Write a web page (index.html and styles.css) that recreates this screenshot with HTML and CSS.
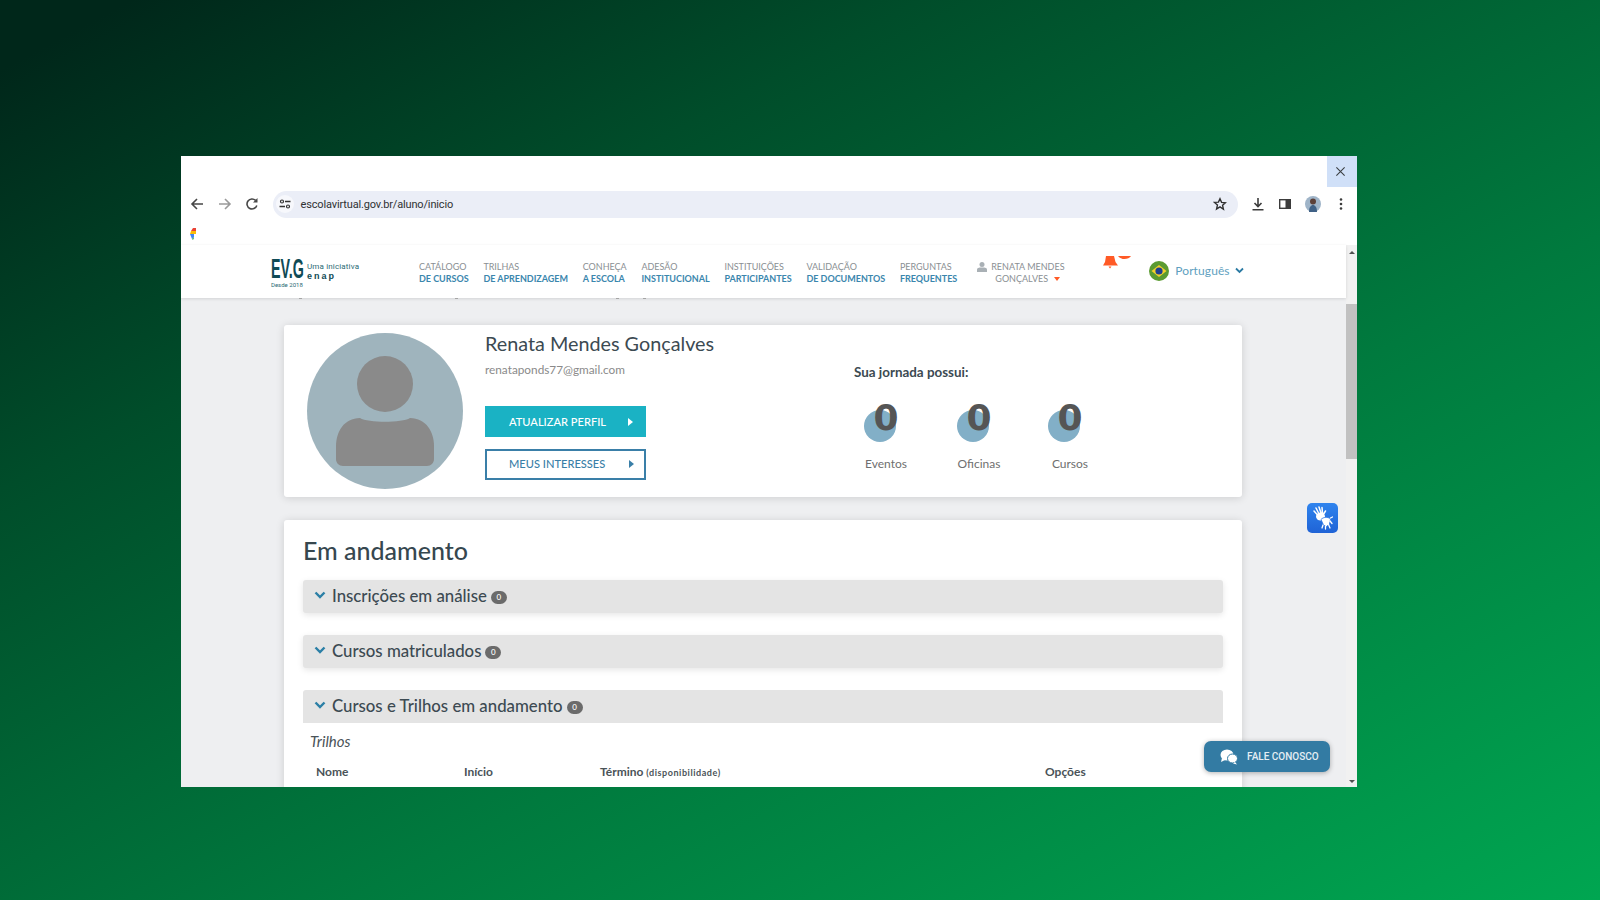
FILE: index.html
```html
<!DOCTYPE html>
<html lang="pt-BR">
<head>
    <meta charset="UTF-8">
    <title>Escola Virtual</title>
    <link rel="stylesheet" href="styles.css">
</head>
<body>
    <div class="window">
        <div class="tabstrip">
            <div class="tab-close">
                <svg width="11" height="11" viewBox="0 0 12 12"><path d="M1.500 1.500l9 9M10.500 1.500l-9 9" stroke="#3c4043" stroke-width="1.200" fill="none"/></svg>
            </div>
        </div>
        <div class="toolbar">
            <svg class="tb-icon" width="14" height="14" viewBox="0 0 14 14"><path d="M13 7H2.500M7 2L2 7l5 5" stroke="#474747" stroke-width="1.600" fill="none"/></svg>
            <svg class="tb-icon" width="14" height="14" viewBox="0 0 14 14"><path d="M1 7h10.500M7 2l5 5-5 5" stroke="#9a9a9a" stroke-width="1.600" fill="none"/></svg>
            <svg class="tb-icon" width="14" height="14" viewBox="0 0 14 14"><path d="M11.800 8.500A5 5 0 1 1 10.600 3.500" stroke="#474747" stroke-width="1.600" fill="none"/><path d="M12.500 1v4.500H8z" fill="#474747"/></svg>
            <div class="urlbar">
                <span class="site-icon">
                    <svg width="12" height="12" viewBox="0 0 12 12"><circle cx="3" cy="3.500" r="1.500" fill="none" stroke="#333" stroke-width="1.200"/><path d="M6 3.500h5.500M.5 8.500H6" stroke="#333" stroke-width="1.300" fill="none"/><circle cx="9" cy="8.500" r="1.500" fill="none" stroke="#333" stroke-width="1.200"/></svg>
                </span>
                <span class="url">escolavirtual.gov.br/aluno/inicio</span>
                <svg class="star" width="14" height="14" viewBox="0 0 24 24"><path d="M12 3l2.700 6.200 6.800.6-5.100 4.500 1.500 6.700L12 17l-5.900 3.500 1.500-6.700-5.100-4.500 6.800-.6z" fill="none" stroke="#303030" stroke-width="2.400"/></svg>
            </div>
            <div class="tb-right">
                <svg width="14" height="14" viewBox="0 0 14 14"><path d="M7 1v8M3.500 6L7 9.500 10.500 6M1.500 12.700h11" stroke="#3c3c3c" stroke-width="1.600" fill="none"/></svg>
                <svg width="14" height="14" viewBox="0 0 14 14"><rect x="1.700" y="2.700" width="10.600" height="8.600" fill="none" stroke="#3c3c3c" stroke-width="1.400"/><rect x="7.500" y="2.700" width="4.800" height="8.600" fill="#3c3c3c"/></svg>
                <svg width="16" height="16" viewBox="0 0 16 16"><circle cx="8" cy="8" r="8" fill="#9fb4c8"/><circle cx="8" cy="5.500" r="3" fill="#5b4038"/><path d="M4 16c0-5 2-7 4-7s4 2 4 7z" fill="#3f6186"/></svg>
                <svg class="kebab" width="4" height="14" viewBox="0 0 4 14"><circle cx="2" cy="2.500" r="1.300" fill="#3c3c3c"/><circle cx="2" cy="7" r="1.300" fill="#3c3c3c"/><circle cx="2" cy="11.500" r="1.300" fill="#3c3c3c"/></svg>
            </div>
        </div>
        <div class="bookmarks">
            <svg width="6" height="13" viewBox="0 0 6 13"><path d="M6 1H3L1 4h5z" fill="#ea4335"/><path d="M1 4L0 7l6 0V4z" fill="#fbbc05"/><path d="M0 7l2 5 2 -2V7z" fill="#4285f4"/><path d="M4 7v3l-2 2 1 1 1-2z" fill="#34a853"/></svg>
        </div>

        <div class="viewport">
            <div class="main">
                <nav class="nav">
                    <div class="logo">
                        <span class="logo-mark">EV.G</span>
                        <div class="logo-side">
                            <span class="logo-line">Uma iniciativa</span>
                            <span class="logo-enap">enap</span>
                        </div>
                        <span class="logo-since">Desde 2018</span>
                    </div>
                    <ul class="menu">
                        <li><span>CATÁLOGO</span><b>DE CURSOS</b></li>
                        <li><span>TRILHAS</span><b>DE APRENDIZAGEM</b></li>
                        <li><span>CONHEÇA</span><b>A ESCOLA</b></li>
                        <li><span>ADESÃO</span><b>INSTITUCIONAL</b></li>
                        <li><span>INSTITUIÇÕES</span><b>PARTICIPANTES</b></li>
                        <li><span>VALIDAÇÃO</span><b>DE DOCUMENTOS</b></li>
                        <li><span>PERGUNTAS</span><b>FREQUENTES</b></li>
                    </ul>
                    <div class="user">
                        <svg width="10" height="10" viewBox="0 0 10 10"><circle cx="5" cy="2.500" r="2.500" fill="#a9b0b5"/><path d="M0 10V7.500C0 6 1.500 5.500 5 5.500s5 .5 5 2V10z" fill="#a9b0b5"/></svg>
                        <div class="user-name">RENATA MENDES<br>GONÇALVES <i class="caret"></i></div>
                    </div>
                    <svg class="bell" width="28" height="13" viewBox="0 0 28 13"><path d="M3 0h8l1.500 6 2.500 3.500H0L2 6z" fill="#ff5a26"/><path d="M5.500 10.500h3L7 12.500z" fill="#ff5a26"/><path d="M15 0h13c-2 3-9 5-13 0z" fill="#ff5a26"/></svg>
                    <div class="lang">
                        <svg width="20" height="20" viewBox="0 0 20 20"><circle cx="10" cy="10" r="10" fill="#5b9b31"/><path d="M10 4l7.500 6L10 16 2.500 10z" fill="#f3d02c"/><circle cx="10" cy="10" r="3.600" fill="#1f3f8f"/></svg>
                        <span>Português</span>
                        <svg width="9" height="7" viewBox="0 0 9 7"><path d="M1 1.500l3.500 3.500L8 1.500" stroke="#2b7aa3" stroke-width="1.800" fill="none"/></svg>
                    </div>
                </nav>

                <div class="page">
                    <section class="card profile">
                        <svg class="avatar" width="156" height="156" viewBox="0 0 156 156">
                            <circle cx="78" cy="78" r="78" fill="#9fb4bd"/>
                            <circle cx="78" cy="51" r="28" fill="#8a8a8a"/>
                            <path d="M53 85c8 5 42 5 50 0 16 0 24 14 24 28v13c0 4-3 7-7 7H36c-4 0-7-3-7-7v-13c0-14 8-28 24-28z" fill="#8a8a8a"/>
                        </svg>
                        <div class="profile-info">
                            <h1 class="profile-name">Renata Mendes Gonçalves</h1>
                            <p class="profile-mail">renataponds77@gmail.com</p>
                            <a class="btn btn-fill">ATUALIZAR PERFIL <i class="tri"></i></a>
                            <a class="btn btn-line">MEUS INTERESSES <i class="tri"></i></a>
                        </div>
                        <div class="journey">
                            <h3 class="journey-title">Sua jornada possui:</h3>
                            <div class="stats">
                                <div class="stat"><div class="stat-badge"><i class="dot"></i><b>0</b></div><span>Eventos</span></div>
                                <div class="stat"><div class="stat-badge"><i class="dot"></i><b>0</b></div><span>Oficinas</span></div>
                                <div class="stat"><div class="stat-badge"><i class="dot"></i><b>0</b></div><span>Cursos</span></div>
                            </div>
                        </div>
                    </section>

                    <section class="card progress">
                        <h2 class="progress-title">Em andamento</h2>
                        <div class="acc">
                            <svg width="12" height="9" viewBox="0 0 12 9"><path d="M1.500 1.500L6 6l4.500-4.500" stroke="#2b7fa6" stroke-width="2.400" fill="none"/></svg>
                            Inscrições em análise <em class="count">0</em>
                        </div>
                        <div class="acc">
                            <svg width="12" height="9" viewBox="0 0 12 9"><path d="M1.500 1.500L6 6l4.500-4.500" stroke="#2b7fa6" stroke-width="2.400" fill="none"/></svg>
                            Cursos matriculados <em class="count">0</em>
                        </div>
                        <div class="acc acc-open">
                            <svg width="12" height="9" viewBox="0 0 12 9"><path d="M1.500 1.500L6 6l4.500-4.500" stroke="#2b7fa6" stroke-width="2.400" fill="none"/></svg>
                            Cursos e Trilhos em andamento <em class="count">0</em>
                        </div>
                        <div class="acc-body">
                            <p class="acc-sub">Trilhos</p>
                            <div class="cols">
                                <span>Nome</span>
                                <span>Início</span>
                                <span>Término <small>(disponibilidade)</small></span>
                                <span>Opções</span>
                            </div>
                        </div>
                    </section>
                </div>

                <i class="peek"></i>
                <div class="libras">
                    <svg width="20" height="24" viewBox="0 0 20 24">
                        <path d="M3 2l3 6M6 1l2 6M9 1.500L9.500 7M1 5l4 4.500M12.500 5L10 9" stroke="#fff" stroke-width="1.500" stroke-linecap="round" fill="none"/>
                        <ellipse cx="7.500" cy="10.500" rx="4.500" ry="4" fill="#fff"/>
                        <path d="M8 13.500c2-2.500 7-3 9.500-.5l-1 5-3 2.500-3-1.500z" fill="#fff" stroke="#2a73e4" stroke-width=".8"/>
                        <path d="M10 19l-1 3M12.500 20v3M15.500 18.500l1.500 3.500M17 15l2 2.500M17.500 12l2-1" stroke="#fff" stroke-width="1.300" stroke-linecap="round" fill="none"/>
                    </svg>
                </div>
                <div class="talk">
                    <svg width="18" height="16" viewBox="0 0 18 16"><ellipse cx="7" cy="6" rx="6.500" ry="5.500" fill="#fff"/><path d="M2 9l-1 4 4-2z" fill="#fff"/><ellipse cx="12.500" cy="9.500" rx="5" ry="4.500" fill="#fff" stroke="#337ba3"/><path d="M15 13l2 2.500-4-1z" fill="#fff"/></svg>
                    <span>FALE CONOSCO</span>
                </div>
            </div>

            <div class="scrollbar">
                <i class="sb-up"></i>
                <div class="sb-thumb"></div>
                <i class="sb-down"></i>
            </div>
        </div>
    </div>
</body>
</html>
```

FILE: styles.css
```css
html, body {
    height: 100%;
}
body {
    margin: 0;
    box-sizing: border-box;
    padding: 156px 0 0 181px;
    overflow: hidden;
    background: linear-gradient(152deg, #00271a 4%, #004d2a 28%, #007a3e 62%, #00a651 100%);
    font-family: "Lato", "Liberation Sans", sans-serif;
    color: #3c4a52;
}
.window {
    width: 1176px;
    height: 631px;
    background: #fff;
    display: flex;
    flex-direction: column;
    overflow: hidden;
}

/* browser chrome */
.tabstrip {
    height: 31px;
    flex: none;
    display: flex;
    justify-content: flex-end;
}
.tab-close {
    width: 30px;
    padding-right: 3px;
    box-sizing: border-box;
    background: #d0e0f8;
    display: flex;
    align-items: center;
    justify-content: center;
}
.toolbar {
    height: 34px;
    flex: none;
    display: flex;
    align-items: center;
    padding-left: 9px;
}
.tb-icon {
    margin-right: 13.500px;
}
.urlbar {
    width: 965px;
    height: 27px;
    background: #ebeef7;
    border-radius: 14px;
    display: flex;
    align-items: center;
    padding: 0 11px 0 3px;
    box-sizing: border-box;
}
.site-icon {
    width: 18px;
    height: 18px;
    border-radius: 50%;
    background: #f7f8fc;
    display: flex;
    align-items: center;
    justify-content: center;
    margin-right: 7px;
}
.url {
    flex: 1;
    font: 11px "Roboto", "Liberation Sans", sans-serif;
    letter-spacing: -.15px;
    color: #2f3133;
}
.tb-right {
    display: flex;
    align-items: center;
    gap: 13px;
    margin-left: 13px;
}
.kebab {
    margin-left: 5px;
}
.bookmarks {
    height: 24px;
    flex: none;
    padding: 3px 0 0 9px;
    box-sizing: border-box;
}

.viewport {
    flex: 1;
    display: flex;
    min-height: 0;
}
.main {
    flex: 1;
    position: relative;
    display: flex;
    flex-direction: column;
    min-width: 0;
}

/* site nav */
.nav {
    height: 53px;
    flex: none;
    display: flex;
    align-items: center;
    background: #fff;
    box-shadow: 0 1px 3px rgba(0, 0, 0, .12);
    position: relative;
    z-index: 2;
    padding-left: 90px;
}
.logo {
    width: 148px;
    height: 35px;
    flex: none;
    display: grid;
    grid-template-columns: 36px 1fr;
    grid-template-rows: 26px 9px;
    color: #0f4a55;
}
.logo-mark {
    margin-top: 5px;
    height: 20px;
    font: bold 28px/20px "Liberation Sans", sans-serif;
    display: block;
    white-space: nowrap;
    transform: scaleX(.51);
    transform-origin: left center;
}
.logo-side {
    display: flex;
    flex-direction: column;
    padding-top: 8px;
}
.logo-line {
    font: 8px/10px "Roboto", sans-serif;
    letter-spacing: .15px;
    color: #2a6a75;
}
.logo-enap {
    font: bold 9px/8px "Liberation Sans", sans-serif;
    letter-spacing: 2px;
}
.logo-since {
    grid-column: 1 / 3;
    font: 6px/9px "Roboto", sans-serif;
    color: #2a6a75;
}
.menu {
    list-style: none;
    margin: 0;
    padding: 2px 0 0;
    display: flex;
    gap: 14.800px;
    font-size: 9px;
    letter-spacing: -.02px;
    line-height: 12px;
}
.menu span,
.menu b {
    display: block;
    white-space: nowrap;
}
.menu span {
    color: #8a8f93;
}
.menu b {
    font-weight: 700;
    color: #3a86ad;
}
.user {
    display: flex;
    margin-left: 20px;
    padding-top: 2px;
    width: 90px;
    gap: 4px;
    flex: none;
    font-size: 9px;
    line-height: 12px;
    color: #8a8f93;
}
.user svg {
    margin-top: 1px;
}
.user-name {
    text-align: center;
    white-space: nowrap;
}
.caret {
    display: inline-block;
    width: 0;
    height: 0;
    margin-left: 4px;
    border: 3px solid transparent;
    border-top: 4px solid #ff5a26;
    border-bottom: 0;
    vertical-align: 1px;
}
.bell {
    flex: none;
    margin: 0 0 18px 36px;
}
.lang {
    display: flex;
    align-items: center;
    margin: 0 0 2px 18px;
    gap: 6px;
    font-size: 12px;
    letter-spacing: .1px;
    color: #5f9fc0;
}
.lang svg:last-child {
    margin-left: -1px;
}

/* page */
.page {
    flex: 1;
    background: #eeeff1;
    padding: 27px 0 0 103px;
    overflow: hidden;
    min-height: 0;
}
.card {
    width: 958px;
    background: #fff;
    border-radius: 3px;
    box-shadow: 0 1px 8px rgba(0, 0, 0, .14);
    box-sizing: border-box;
}
.profile {
    height: 172px;
    display: flex;
    margin-bottom: 23px;
}
.avatar {
    flex: none;
    margin: 8px 22px 0 23px;
}
.profile-info {
    width: 369px;
    flex: none;
}
.profile-name {
    margin: 6px 0 0;
    font-size: 19.800px;
    line-height: 24px;
    font-weight: 400;
    color: #3c4a52;
}
.profile-mail {
    margin: 7px 0 28px;
    font-size: 11.800px;
    line-height: 16px;
    color: #8a8a8a;
}
.btn {
    width: 161px;
    height: 31px;
    box-sizing: border-box;
    display: flex;
    align-items: center;
    justify-content: space-between;
    padding: 0 13px 0 24px;
    margin-bottom: 12px;
    font-size: 11.100px;
    font-weight: 500;
}
.btn-fill {
    background: #1ab2c4;
    color: #fff;
}
.btn-line {
    border: 2px solid #3a7fa8;
    padding: 0 10px 2px 22px;
    color: #3a7fa8;
}
.tri {
    width: 0;
    height: 0;
    border: 4px solid transparent;
    border-left: 5px solid currentColor;
    border-right: 0;
}
.journey-title {
    margin: 38px 0 0;
    font-size: 13.400px;
    line-height: 18px;
    font-weight: 700;
    color: #3c4a52;
}
.stats {
    display: flex;
    gap: 28px;
    margin-top: 14px;
}
.stat {
    width: 64px;
    display: flex;
    flex-direction: column;
    align-items: center;
    font-size: 12px;
    line-height: 16px;
    color: #6f6f6f;
}
.stat:nth-child(2) {
    margin: 0 -1px 0 1px;
}
.stat-badge {
    position: relative;
    width: 64px;
    height: 50px;
    margin-bottom: 11px;
}
.dot {
    position: absolute;
    left: 10px;
    top: 15px;
    width: 32px;
    height: 32px;
    border-radius: 50%;
    background: #82afc7;
}
.stat-badge b {
    position: absolute;
    left: 0;
    right: 0;
    top: 1px;
    text-align: center;
    font: bold 36px/44px "DejaVu Sans", sans-serif;
    color: #555;
}
.progress {
    min-height: 400px;
    padding: 1px 19px 0;
}
.progress-title {
    margin: 0 0 1px;
    height: 58px;
    font-size: 25px;
    line-height: 58px;
    font-weight: 500;
    color: #36474f;
}
.acc {
    height: 33px;
    box-sizing: border-box;
    margin-bottom: 22px;
    padding: 0 0 2px 11px;
    display: flex;
    align-items: center;
    gap: 6px;
    background: #e4e4e4;
    border-radius: 3px;
    box-shadow: 0 2px 6px rgba(0, 0, 0, .1);
    font-size: 16.800px;
    font-weight: 500;
    color: #3c4a52;
}
.acc svg {
    margin-top: -1px;
}
.acc-open {
    margin-bottom: 0;
    box-shadow: none;
    border-radius: 3px 3px 0 0;
}
.count {
    min-width: 16px;
    height: 13px;
    margin: 4px 0 0 -2px;
    border-radius: 7px;
    background: #6b6b6b;
    color: #fff;
    font-size: 8px;
    font-style: normal;
    line-height: 13px;
    text-align: center;
}
.acc-sub {
    margin: 0;
    padding: 9px 0 0 7px;
    font-size: 15px;
    line-height: 18px;
    font-style: italic;
    color: #4a5358;
}
.cols {
    display: grid;
    grid-template-columns: 148px 136px 445px 1fr;
    padding: 14px 0 0 13px;
    font-size: 12px;
    line-height: 16px;
    font-weight: 700;
    color: #4a5358;
}
.cols small {
    font-size: 9px;
    letter-spacing: .55px;
}

/* floating things */
.peek {
    position: absolute;
    left: 118px;
    top: 53px;
    width: 3px;
    height: 1px;
    background: #a5a5a5;
    box-shadow: 156px 0 #a5a5a5, 317px 0 #a5a5a5, 344px 0 #a5a5a5;
    z-index: 3;
}
.libras {
    position: absolute;
    left: 1126px;
    top: 258px;
    width: 31px;
    height: 30px;
    border-radius: 5px;
    background: linear-gradient(#2f84ee, #1f63d6);
    display: flex;
    align-items: center;
    justify-content: center;
    z-index: 3;
}
.talk {
    position: absolute;
    left: 1023px;
    top: 496px;
    width: 126px;
    height: 31px;
    border-radius: 7px;
    background: #337ba3;
    box-shadow: 0 1px 5px rgba(0, 0, 0, .3);
    display: flex;
    align-items: center;
    gap: 9px;
    padding-left: 16px;
    box-sizing: border-box;
    font: 500 10px "Roboto", sans-serif;
    color: #e4eef4;
    z-index: 3;
}

/* scrollbar */
.scrollbar {
    width: 11px;
    flex: none;
    background: #f1f1f1;
    display: flex;
    flex-direction: column;
    align-items: center;
    position: relative;
}
.sb-up {
    margin-top: 6px;
    border: 3px solid transparent;
    border-bottom: 3px solid #505050;
    border-top: 0;
}
.sb-thumb {
    width: 100%;
    height: 155px;
    margin-top: 50px;
    background: #c1c1c1;
}
.sb-down {
    margin-top: auto;
    margin-bottom: 4px;
    border: 3px solid transparent;
    border-top: 3px solid #505050;
    border-bottom: 0;
}
```
